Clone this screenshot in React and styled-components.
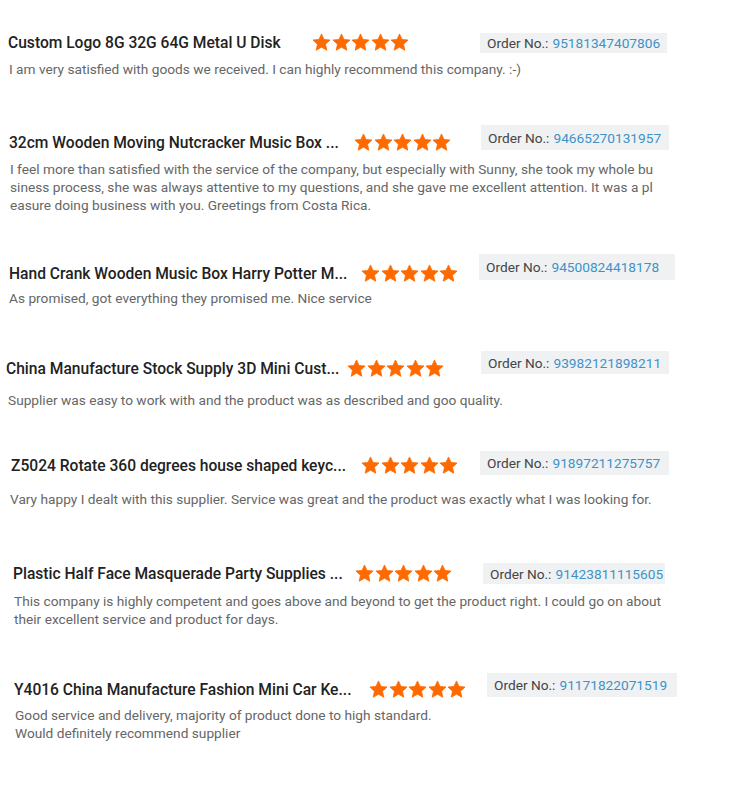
import styled, { createGlobalStyle } from "styled-components";

const Global = createGlobalStyle`
  body {
    margin: 0;
    background: #fff;
    font-family: Roboto, "Liberation Sans", Arial, sans-serif;
  }
`;

const Page = styled.div`
  width: 750px;
  min-height: 800px;
  background: #fff;
`;

const Block = styled.div`
  padding-top: ${(p) => p.$mt}px;
`;

const Row = styled.div`
  display: flex;
  align-items: flex-start;
  padding-left: ${(p) => p.$pad}px;
  height: ${(p) => p.$h}px;
`;

const TitleGroup = styled.div`
  display: flex;
  align-items: center;
  margin-top: ${(p) => p.$top}px;
  width: ${(p) => p.$w}px;
  flex-shrink: 0;
`;

const Title = styled.div`
  width: ${(p) => p.$w}px;
  flex-shrink: 0;
  font-size: 15.6px;
  font-weight: 500;
  line-height: 18px;
  color: #222;
  white-space: nowrap;
  overflow: hidden;
`;

const Stars = styled.div`
  display: flex;
  gap: 0.5px;
`;

const OrderBox = styled.div`
  margin-left: ${(p) => p.$ml}px;
  width: ${(p) => p.$w}px;
  height: ${(p) => p.$h}px;
  box-sizing: border-box;
  padding-left: 7px;
  display: flex;
  align-items: center;
  background: #f0f1f2;
  font-size: 13.7px;
  color: #444;
  white-space: nowrap;
  flex-shrink: 0;
`;

const OrderNo = styled.span`
  color: #3d93c8;
  margin-left: 4px;
`;

const Comment = styled.div`
  margin-top: ${(p) => p.$mt}px;
  padding-left: ${(p) => p.$pad}px;
  font-size: 13.7px;
  line-height: 18px;
  color: #666;
`;

const Line = styled.div`
  white-space: nowrap;
`;

function Star() {
  return (
    <svg width="19" height="19" viewBox="0 0 24 24">
      <polygon
        points="12,1.2 15.2,8.1 22.8,8.9 17.1,14.1 18.7,21.8 12,17.9 5.3,21.8 6.9,14.1 1.2,8.9 8.8,8.1"
        fill="#ff6a00"
        stroke="#ff6a00"
        strokeWidth="1"
        strokeLinejoin="round"
      />
    </svg>
  );
}

const reviews = [
  {
    title: "Custom Logo 8G 32G 64G Metal U Disk",
    pad: 8, starsX: 312, orderX: 480, orderW: 187, boxTop: 33, boxH: 20, titleY: 42,
    cPad: 9, cY: 69, order: "95181347407806",
    lines: ["I am very satisfied with goods we received. I can highly recommend this company. :-)"],
  },
  {
    title: "32cm Wooden Moving Nutcracker Music Box ...",
    pad: 9, starsX: 354, orderX: 481, orderW: 188, boxTop: 125, boxH: 25, titleY: 142,
    cPad: 10, cY: 169, order: "94665270131957",
    lines: [
      "I feel more than satisfied with the service of the company, but especially with Sunny, she took my whole bu",
      "siness process, she was always attentive to my questions, and she gave me excellent attention. It was a pl",
      "easure doing business with you. Greetings from Costa Rica.",
    ],
  },
  {
    title: "Hand Crank Wooden Music Box Harry Potter M...",
    pad: 9, starsX: 361, orderX: 479, orderW: 196, boxTop: 254, boxH: 26, titleY: 273,
    cPad: 9, cY: 298, order: "94500824418178",
    lines: ["As promised, got everything they promised me. Nice service"],
  },
  {
    title: "China Manufacture Stock Supply 3D Mini Cust...",
    pad: 6, starsX: 347, orderX: 481, orderW: 188, boxTop: 351, boxH: 23, titleY: 368,
    cPad: 8, cY: 400, order: "93982121898211",
    lines: ["Supplier was easy to work with and the product was as described and goo quality."],
  },
  {
    title: "Z5024 Rotate 360 degrees house shaped keyc...",
    pad: 11, starsX: 361, orderX: 480, orderW: 189, boxTop: 451, boxH: 24, titleY: 465,
    cPad: 10, cY: 499, order: "91897211275757",
    lines: ["Vary happy I dealt with this supplier. Service was great and the product was exactly what I was looking for."],
  },
  {
    title: "Plastic Half Face Masquerade Party Supplies ...",
    pad: 13, starsX: 355, orderX: 483, orderW: 182, boxTop: 563, boxH: 21, titleY: 573,
    cPad: 14, cY: 601, order: "91423811115605",
    lines: [
      "This company is highly competent and goes above and beyond to get the product right. I could go on about",
      "their excellent service and product for days.",
    ],
  },
  {
    title: "Y4016 China Manufacture Fashion Mini Car Ke...",
    pad: 14, starsX: 369, orderX: 487, orderW: 190, boxTop: 673, boxH: 24, titleY: 689,
    cPad: 15, cY: 715, order: "91171822071519",
    lines: [
      "Good service and delivery, majority of product done to high standard.",
      "Would definitely recommend supplier",
    ],
  },
];

function Review({ r, prevBottom }) {
  const titleTop = r.titleY - r.boxTop - 9;
  const rowH = Math.max(r.boxH, titleTop + 18);
  const starsW = 97;
  const groupW = r.starsX - r.pad + starsW;
  return (
    <Block $mt={r.boxTop - prevBottom}>
      <Row $pad={r.pad} $h={rowH}>
        <TitleGroup $top={titleTop} $w={groupW}>
          <Title $w={r.starsX - r.pad}>{r.title}</Title>
          <Stars>
            {[0, 1, 2, 3, 4].map((i) => (
              <Star key={i} />
            ))}
          </Stars>
        </TitleGroup>
        <OrderBox $ml={r.orderX - r.starsX - starsW} $w={r.orderW} $h={r.boxH}>
          Order No.:<OrderNo>{r.order}</OrderNo>
        </OrderBox>
      </Row>
      <Comment $mt={r.cY - 9 - (r.boxTop + rowH)} $pad={r.cPad}>
        {r.lines.map((l, i) => (
          <Line key={i}>{l}</Line>
        ))}
      </Comment>
    </Block>
  );
}

export default function App() {
  let bottom = 0;
  return (
    <Page>
      <Global />
      {reviews.map((r) => {
        const prev = bottom;
        bottom = r.cY - 9 + r.lines.length * 18;
        return <Review key={r.order} r={r} prevBottom={prev} />;
      })}
    </Page>
  );
}
